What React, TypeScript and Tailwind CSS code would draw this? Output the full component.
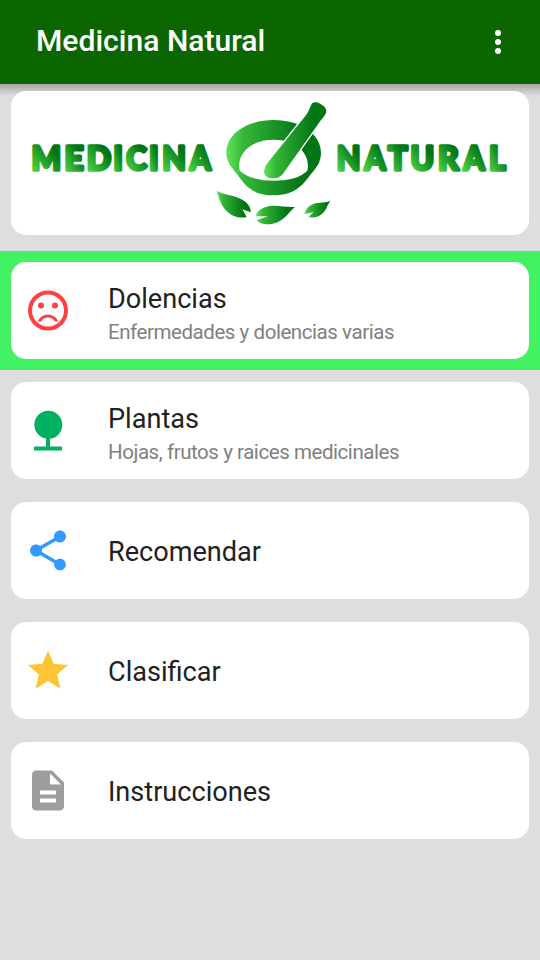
import type { ReactNode } from "react";
import { MdNature, MdShare, MdStar, MdDescription } from "react-icons/md";

type Item = { title: string; subtitle?: string; icon: ReactNode; active?: boolean };

function SadFace() {
  return (
    <svg viewBox="0 0 24 24" className="size-12 text-[#ff4040]" fill="currentColor">
      <circle cx="15.5" cy="9.5" r="1.5" />
      <circle cx="8.5" cy="9.5" r="1.5" />
      <path d="M12 14c-2.33 0-4.32 1.45-5.12 3.5h1.67c.69-1.19 1.97-2 3.45-2s2.75.81 3.45 2h1.67c-.8-2.05-2.79-3.5-5.12-3.5z" />
      <circle cx="12" cy="12" r="9" fill="none" stroke="currentColor" strokeWidth="2" />
    </svg>
  );
}

const items: Item[] = [
  {
    title: "Dolencias",
    subtitle: "Enfermedades y dolencias varias",
    icon: <SadFace />,
    active: true,
  },
  {
    title: "Plantas",
    subtitle: "Hojas, frutos y raices medicinales",
    icon: <MdNature className="size-12 text-[#00b060]" />,
  },
  { title: "Recomendar", icon: <MdShare className="size-12 text-[#3399ff]" /> },
  { title: "Clasificar", icon: <MdStar className="size-12 text-[#ffc433]" /> },
  { title: "Instrucciones", icon: <MdDescription className="size-12 text-[#9e9e9e]" /> },
];

// letter, x origin, advance width
const letters: [string, number, number][] = [
  ["M", 31.6, 29.5],
  ["E", 64.4, 19.2],
  ["D", 86.7, 24.3],
  ["I", 113.2, 9.6],
  ["C", 126.2, 20.5],
  ["I", 148.9, 9.6],
  ["N", 162.2, 23.6],
  ["A", 189.8, 21],
  ["N", 336.8, 23.6],
  ["A", 364.5, 21],
  ["T", 388, 19.6],
  ["U", 410.5, 23.6],
  ["R", 438, 20.7],
  ["A", 463.4, 21],
  ["L", 489, 16.6],
];

function Banner() {
  return (
    <svg viewBox="11 91 518 144" className="block h-36 w-full" role="img">
      <defs>
        <linearGradient id="letter" x1="0" y1="1" x2="0.75" y2="0.1">
          <stop offset="0.1" stopColor="#4fd648" />
          <stop offset="0.85" stopColor="#007514" />
        </linearGradient>
        <linearGradient id="shape" x1="0" y1="0.5" x2="1" y2="0.5">
          <stop offset="0" stopColor="#5fe456" />
          <stop offset="0.18" stopColor="#36b738" />
          <stop offset="0.8" stopColor="#007514" />
        </linearGradient>
      </defs>
      {letters.map(([ch, x, w], i) => (
        <text
          key={i}
          x={x}
          y={169.6}
          textLength={w}
          lengthAdjust="spacingAndGlyphs"
          fill="url(#letter)"
          stroke="url(#letter)"
          strokeWidth="3.4"
          strokeLinejoin="round"
          className="font-['Lato',sans-serif] text-[32.5px] font-black"
        >
          {ch}
        </text>
      ))}
      <g transform="translate(205 90) scale(0.33333)" fill="url(#shape)">
        <path
          fillRule="evenodd"
          d="M64 188C64 132 125 90 206 90S348 132 348 188C348 216 335 232 318 252C294 284 270 316 206 316S120 286 96 252C78 230 64 214 64 188ZM104 242C130 264 165 272 206 272S285 264 307 242C318 194 278 149 206 149C132 149 94 196 104 242Z"
        />
        <path
          d="M320 42C323 36 334 34 345 41C360 48 367 59 363 69C360 77 354 82 348 90L236 248C228 260 218 265 204 265C184 265 175 254 178 239C180 228 188 219 194 211L304 74C312 63 315 51 320 42Z"
          stroke="white"
          strokeWidth="8"
          paintOrder="stroke"
        />
        <path d="M35 302C62 317 94 315 119 334C132 344 138 355 137 367L112 358L125 381C104 386 80 380 61 359C46 342 41 321 35 302Z" />
        <path d="M270 351C236 353 205 340 174 354C160 361 154 368 153 379L189 379L154 391C168 405 194 407 219 396C243 385 251 366 270 351Z" />
        <path d="M376 333C356 340 333 335 315 347C303 355 299 364 299 372L326 366L311 380C326 386 342 381 353 370C365 358 367 344 376 333Z" />
      </g>
    </svg>
  );
}

function Row({ item }: { item: Item }) {
  return (
    <li className={item.active ? "bg-[#42f263] p-[11px]" : "p-[11px]"}>
      <button className="flex h-[97px] w-full items-center gap-9 rounded-[15px] bg-white pb-px pl-[13px] text-left [&>svg]:translate-y-[0.5px]">
        {item.icon}
        <span className={item.subtitle ? "flex flex-col pt-[9px]" : "flex flex-col pt-[3px]"}>
          <span className="text-[27.1px] leading-8 text-[#212121]">{item.title}</span>
          {item.subtitle && (
            <span className="mt-[3px] text-[20.5px] leading-7 tracking-[-0.44px] text-[#808080]">
              {item.subtitle}
            </span>
          )}
        </span>
      </button>
    </li>
  );
}

export default function App() {
  return (
    <div className="h-[960px] w-[540px] overflow-hidden bg-[#dedede] font-['Roboto',sans-serif]">
      <header className="relative flex h-[84px] items-center justify-between bg-[#0b6600] pr-[39px] pl-9">
        <h1 className="pb-0.5 text-[30.1px] leading-9 font-medium text-white">Medicina Natural</h1>
        <div className="flex flex-col gap-[3px]">
          <i className="size-1.5 rounded-full bg-white" />
          <i className="size-1.5 rounded-full bg-white" />
          <i className="size-1.5 rounded-full bg-white" />
        </div>
        <div className="absolute inset-x-0 top-full h-3 bg-linear-to-b from-black/25 to-transparent" />
      </header>
      <main>
        <div className="relative mx-[11px] mt-[7px] overflow-hidden rounded-[15px] bg-white">
          <Banner />
        </div>
        <ul className="mt-4 flex flex-col gap-px">
          {items.map((item) => (
            <Row key={item.title} item={item} />
          ))}
        </ul>
      </main>
    </div>
  );
}
